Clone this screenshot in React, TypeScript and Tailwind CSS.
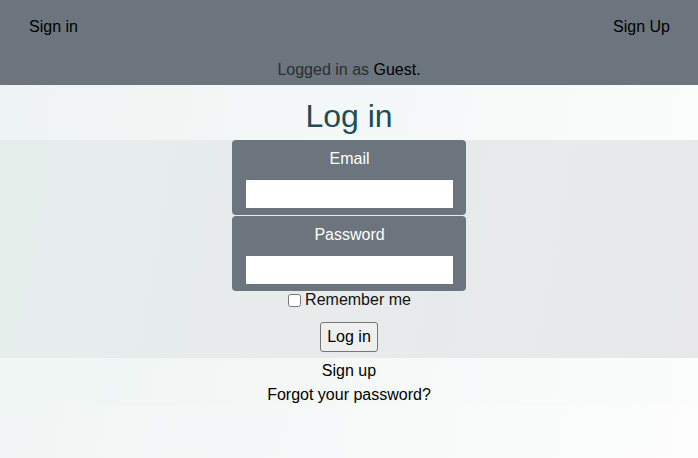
import React from "react";

export default function App() {
  return (
    <div
      className="min-h-[458px] w-full bg-[linear-gradient(100deg,#eff5f4,#fdfdfd)] text-black"
      style={{ fontFamily: '"Liberation Sans", Arial, sans-serif' }}
    >
      <header className="h-[85px] bg-[#6c757d]">
        <div className="flex h-[52px] items-center justify-between pl-[29px] pr-[28px] pt-[2px] text-[16px]">
          <a className="text-black">Sign in</a>
          <a className="text-black">Sign Up</a>
        </div>
        <div className="text-center text-[16px] leading-[24px] pt-[6px]">
          <span className="text-[#2a2e32]">Logged in as </span>
          <span className="text-black">Guest.</span>
        </div>
      </header>

      <section className="flex h-[55px] items-center justify-center bg-[linear-gradient(100deg,#eef4f3,#fbfcfc)]">
        <h1 className="text-[32px] leading-[38px] text-[#1f4d57] pt-[6px]">Log in</h1>
      </section>

      <section className="flex h-[218px] flex-col items-center bg-[linear-gradient(100deg,#e6eeec,#e8e8ea)]">
        <div className="flex w-[234px] flex-col rounded-[4px] bg-[#6c757d] pl-[14px] pr-[13px] pt-[9px] pb-[7px]">
          <div className="text-center text-[16px] leading-[20px] text-white">Email</div>
          <input className="mt-[11px] h-[28px] w-full bg-white outline-none" type="email" />
        </div>
        <div className="mt-[1px] flex w-[234px] flex-col rounded-[4px] bg-[#6c757d] pl-[14px] pr-[13px] pt-[9px] pb-[7px]">
          <div className="text-center text-[16px] leading-[20px] text-white">Password</div>
          <input className="mt-[11px] h-[28px] w-full bg-white outline-none" type="password" />
        </div>
        <label className="mt-[1px] flex h-[16px] items-center text-[16px] leading-[18px] text-[#111]">
          <input type="checkbox" className="mr-[4px] ml-[1px] h-[13px] w-[13px]" />
          Remember me
        </label>
        <button className="mt-[14px] h-[30px] w-[58px] rounded-[3px] border border-[#767676] bg-[#efefef] text-[16px] text-black">
          Log in
        </button>
      </section>

      <section className="flex h-[48px] flex-col items-center bg-[linear-gradient(100deg,#eef5f3,#fbfcfc)] pt-[1px] text-[16px] leading-[24px]">
        <a className="text-black">Sign up</a>
        <a className="text-black">Forgot your password?</a>
      </section>
    </div>
  );
}
